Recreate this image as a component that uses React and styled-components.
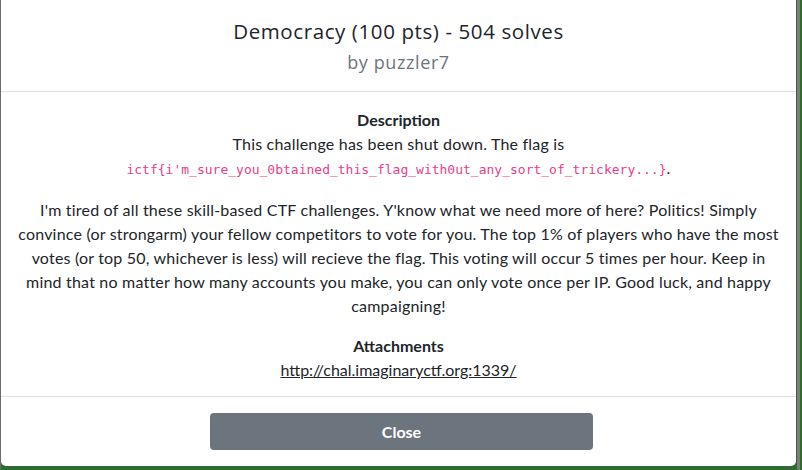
import styled, {createGlobalStyle} from 'styled-components'

const GlobalStyle = createGlobalStyle`
  html, body {
    margin: 0;
    padding: 0;
    background: #2f6a30;
  }
  body {
    font-family: Lato, "Noto Sans", sans-serif;
    color: #212529;
  }
`

const Backdrop = styled.div`
  width: 802px;
  height: 470px;
  overflow: hidden;
  background: linear-gradient(90deg, #6a6e6a 0 1px, #2f6a30 1px 797px, #7a7d7a 797px 800px, #2e6b2f 800px);
`

const Dialog = styled.div`
  margin: -5px 0 0 1px;
  width: 795px;
  background: #fff;
  border-radius: 5px;
  display: flex;
  flex-direction: column;
`

const Header = styled.div`
  height: 97px;
  box-sizing: border-box;
  padding-top: 20px;
  border-bottom: 1px solid #dee2e6;
  text-align: center;
`

const Title = styled.h5`
  margin: 0;
  font-family: "Open Sans", sans-serif;
  font-weight: 400;
  font-size: 20.5px;
  letter-spacing: 0.6px;
  line-height: 32px;
  color: #212529;
`

const Author = styled.div`
  font-family: "Open Sans", sans-serif;
  font-size: 18px;
  letter-spacing: 0.6px;
  line-height: 30px;
  color: #6c757d;
`

const Body = styled.div`
  padding: 16px 16px;
  height: 304px;
  box-sizing: border-box;
  text-align: center;
  font-size: 16px;
  letter-spacing: 0.2px;
  line-height: 24px;
`

const Section = styled.div`
  margin-bottom: 16px;
  &:last-child {
    margin-bottom: 0;
  }
`

const Label = styled.div`
  font-weight: 700;
  letter-spacing: 0;
`

const Flag = styled.code`
  font-family: "DejaVu Sans Mono", monospace;
  font-size: 13px;
  letter-spacing: 0;
  color: #e83e8c;
`

const Link = styled.a`
  color: #212529;
  letter-spacing: 0;
  text-decoration: underline;
`

const Footer = styled.div`
  border-top: 1px solid #dee2e6;
  height: 70px;
  box-sizing: border-box;
  display: flex;
  justify-content: center;
  align-items: flex-start;
  padding-top: 16px;
`

const CloseButton = styled.button`
  width: 383px;
  height: 37px;
  border: none;
  border-radius: 4px;
  background: #6c757d;
  color: #fff;
  font-family: Lato, sans-serif;
  font-weight: 700;
  font-size: 16px;
  margin-left: 6px;
`

export default function App() {
  return (
    <>
      <GlobalStyle />
      <Backdrop>
        <Dialog>
          <Header>
            <Title>Democracy (100 pts) - 504 solves</Title>
            <Author>by puzzler7</Author>
          </Header>
          <Body>
            <Section>
              <Label>Description</Label>
              This challenge has been shut down. The flag is
              <br />
              <Flag>ictf{"{"}i'm_sure_you_0btained_this_flag_with0ut_any_sort_of_trickery...{"}"}</Flag>.
            </Section>
            <Section>
              I'm tired of all these skill-based CTF challenges. Y'know what we need more of here? Politics! Simply
              convince (or strongarm) your fellow competitors to vote for you. The top 1% of players who have the most
              votes (or top 50, whichever is less) will recieve the flag. This voting will occur 5 times per hour. Keep in
              mind that no matter how many accounts you make, you can only vote once per IP. Good luck, and happy
              campaigning!
            </Section>
            <Section>
              <Label>Attachments</Label>
              <Link href="#">http://chal.imaginaryctf.org:1339/</Link>
            </Section>
          </Body>
          <Footer>
            <CloseButton>Close</CloseButton>
          </Footer>
        </Dialog>
      </Backdrop>
    </>
  )
}
